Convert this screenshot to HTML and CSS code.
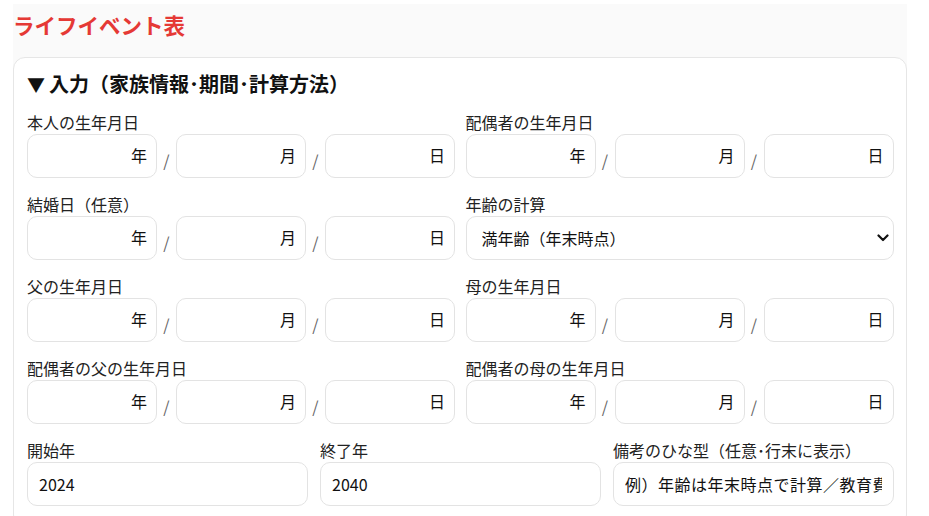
FILE: index.html
```html
<!DOCTYPE html>
<html lang="ja">
<head>
    <meta charset="utf-8">
    <title>ライフイベント表</title>
    <link rel="stylesheet" href="styles.css">
</head>
<body>
    <div class="page">
        <h1 class="title">ライフイベント表</h1>

        <details class="card" open>
            <summary class="card-head">入力（家族情報･期間･計算方法）</summary>

            <div class="grid two">
                <div class="field">
                    <label class="label">本人の生年月日</label>
                    <div class="date">
                        <div class="part"><input class="input"><span class="unit">年</span></div>
                        <span class="sep">/</span>
                        <div class="part"><input class="input"><span class="unit">月</span></div>
                        <span class="sep">/</span>
                        <div class="part"><input class="input"><span class="unit">日</span></div>
                    </div>
                </div>
                <div class="field">
                    <label class="label">配偶者の生年月日</label>
                    <div class="date">
                        <div class="part"><input class="input"><span class="unit">年</span></div>
                        <span class="sep">/</span>
                        <div class="part"><input class="input"><span class="unit">月</span></div>
                        <span class="sep">/</span>
                        <div class="part"><input class="input"><span class="unit">日</span></div>
                    </div>
                </div>

                <div class="field">
                    <label class="label">結婚日（任意）</label>
                    <div class="date">
                        <div class="part"><input class="input"><span class="unit">年</span></div>
                        <span class="sep">/</span>
                        <div class="part"><input class="input"><span class="unit">月</span></div>
                        <span class="sep">/</span>
                        <div class="part"><input class="input"><span class="unit">日</span></div>
                    </div>
                </div>
                <div class="field">
                    <label class="label">年齢の計算</label>
                    <div class="select-wrap">
                        <select class="input select">
                            <option>満年齢（年末時点）</option>
                            <option>数え年</option>
                        </select>
                        <svg class="chevron" width="12" height="8" viewBox="0 0 12 8">
                            <path d="M1.5 1.5 L6 6 L10.5 1.5" fill="none" stroke="#111" stroke-width="2.2" stroke-linecap="round" stroke-linejoin="round"/>
                        </svg>
                    </div>
                </div>

                <div class="field">
                    <label class="label">父の生年月日</label>
                    <div class="date">
                        <div class="part"><input class="input"><span class="unit">年</span></div>
                        <span class="sep">/</span>
                        <div class="part"><input class="input"><span class="unit">月</span></div>
                        <span class="sep">/</span>
                        <div class="part"><input class="input"><span class="unit">日</span></div>
                    </div>
                </div>
                <div class="field">
                    <label class="label">母の生年月日</label>
                    <div class="date">
                        <div class="part"><input class="input"><span class="unit">年</span></div>
                        <span class="sep">/</span>
                        <div class="part"><input class="input"><span class="unit">月</span></div>
                        <span class="sep">/</span>
                        <div class="part"><input class="input"><span class="unit">日</span></div>
                    </div>
                </div>

                <div class="field">
                    <label class="label">配偶者の父の生年月日</label>
                    <div class="date">
                        <div class="part"><input class="input"><span class="unit">年</span></div>
                        <span class="sep">/</span>
                        <div class="part"><input class="input"><span class="unit">月</span></div>
                        <span class="sep">/</span>
                        <div class="part"><input class="input"><span class="unit">日</span></div>
                    </div>
                </div>
                <div class="field">
                    <label class="label">配偶者の母の生年月日</label>
                    <div class="date">
                        <div class="part"><input class="input"><span class="unit">年</span></div>
                        <span class="sep">/</span>
                        <div class="part"><input class="input"><span class="unit">月</span></div>
                        <span class="sep">/</span>
                        <div class="part"><input class="input"><span class="unit">日</span></div>
                    </div>
                </div>
            </div>

            <div class="grid three">
                <div class="field">
                    <label class="label">開始年</label>
                    <input class="input text" value="2024">
                </div>
                <div class="field">
                    <label class="label">終了年</label>
                    <input class="input text" value="2040">
                </div>
                <div class="field">
                    <label class="label">備考のひな型（任意･行末に表示）</label>
                    <input class="input text note" value="例）年齢は年末時点で計算／教育費は目安です">
                </div>
            </div>
        </details>
    </div>
</body>
</html>
```

FILE: styles.css
```css
* {
    box-sizing: border-box;
}
body {
    margin: 0;
    background-color: #fff;
    font-family: "Noto Sans CJK JP", "Noto Sans", sans-serif;
    color: #111;
}
.page {
    width: 894px;
    margin: 4px 0 0 13px;
    background-color: #fafafa;
    padding-top: 4px;
}
.title {
    margin: 0 0 15px;
    font-size: 21.5px;
    line-height: 34px;
    font-weight: 700;
    color: #e53935;
}
.card {
    background-color: #fff;
    border: 1px solid #e6e6e6;
    border-radius: 12px;
    padding: 13px 12px 20px 13px;
}
.card-head {
    list-style: none;
    font-size: 20px;
    line-height: 26px;
    font-weight: 700;
    margin-bottom: 15px;
    cursor: pointer;
}
.card-head::-webkit-details-marker {
    display: none;
}
.card-head::before {
    content: "▼ ";
    font-size: 18px;
}
.grid {
    display: grid;
    row-gap: 16px;
}
.grid.two {
    grid-template-columns: 1fr 1fr;
    column-gap: 10px;
}
.grid.three {
    grid-template-columns: repeat(3, 1fr);
    column-gap: 12px;
    margin-top: 16px;
}
.field {
    display: flex;
    flex-direction: column;
    gap: 2px;
}
.label {
    font-size: 16px;
    line-height: 20px;
    color: #222;
}
.date {
    display: flex;
    align-items: center;
}
.part {
    position: relative;
    width: 130px;
}
.sep {
    width: 19px;
    text-align: center;
    color: #666;
    font-size: 16px;
    padding-top: 7px;
}
.input {
    width: 100%;
    height: 44px;
    border: 1px solid #e3e3e3;
    border-radius: 10px;
    background-color: #fff;
    font-family: inherit;
    font-size: 16px;
    color: #111;
    padding: 0 11px;
    outline: none;
}
.input.note {
    letter-spacing: 0.5px;
}
.unit {
    position: absolute;
    right: 10px;
    top: 11px;
    font-size: 16px;
    line-height: 20px;
    pointer-events: none;
}
.select-wrap {
    position: relative;
}
.select {
    -webkit-appearance: none;
    appearance: none;
    padding-left: 15px;
    padding-right: 30px;
}
.chevron {
    position: absolute;
    right: 5px;
    top: 18px;
    pointer-events: none;
}
```
